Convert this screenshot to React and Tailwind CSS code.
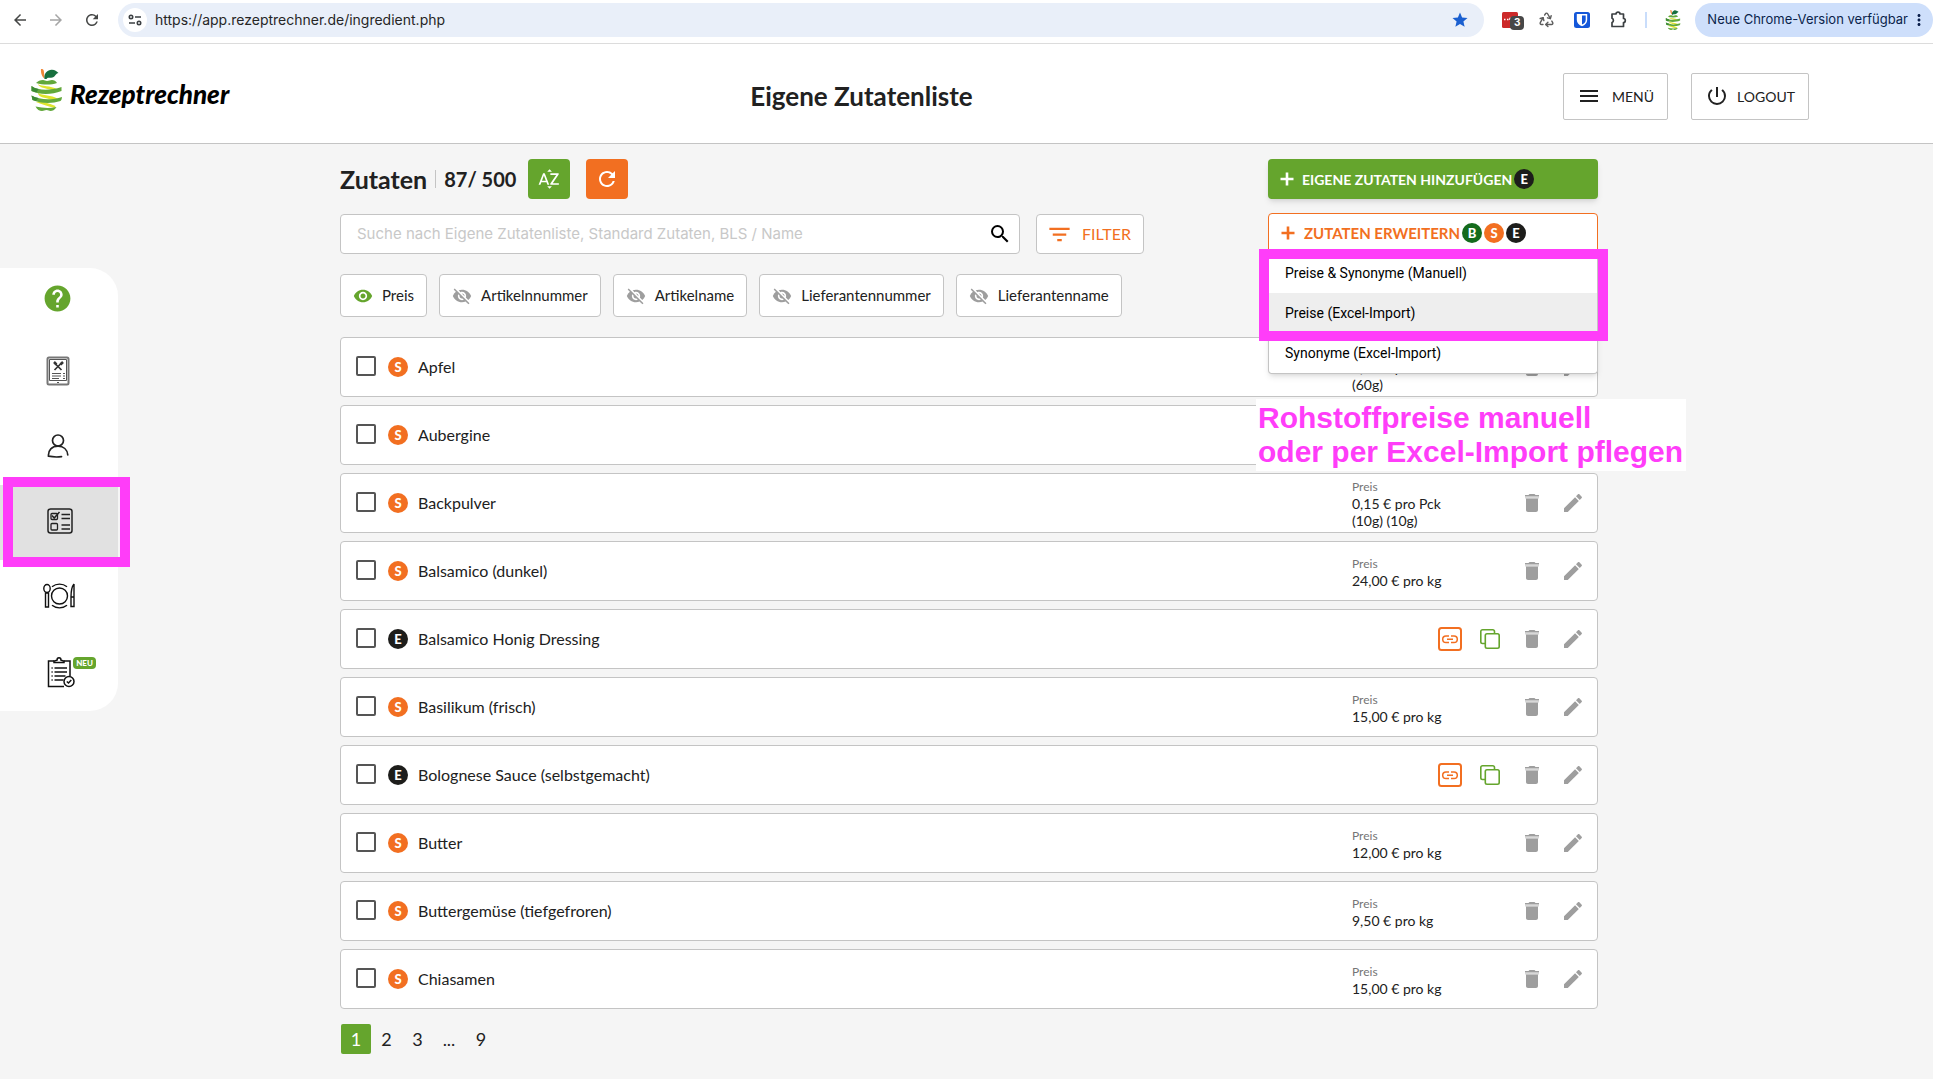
import { useState } from "react";
import { Recycle } from "lucide-react";
import {
  MdArrowBack,
  MdArrowForward,
  MdFilterList,
  MdHelp,
  MdMenu,
  MdMoreVert,
  MdPowerSettingsNew,
  MdRefresh,
  MdSearch,
  MdSortByAlpha,
  MdStar,
  MdVisibility,
  MdVisibilityOff,
} from "react-icons/md";

const ingredients = [
  { id: 1, type: "S", name: "Apfel", price: ["0,35 € pro Stk", "(60g)"] },
  { id: 2, type: "S", name: "Aubergine", price: [] },
  { id: 3, type: "S", name: "Backpulver", price: ["0,15 € pro Pck", "(10g) (10g)"] },
  { id: 4, type: "S", name: "Balsamico (dunkel)", price: ["24,00 € pro kg"] },
  { id: 5, type: "E", name: "Balsamico Honig Dressing", price: [] },
  { id: 6, type: "S", name: "Basilikum (frisch)", price: ["15,00 € pro kg"] },
  { id: 7, type: "E", name: "Bolognese Sauce (selbstgemacht)", price: [] },
  { id: 8, type: "S", name: "Butter", price: ["12,00 € pro kg"] },
  { id: 9, type: "S", name: "Buttergemüse (tiefgefroren)", price: ["9,50 € pro kg"] },
  { id: 10, type: "S", name: "Chiasamen", price: ["15,00 € pro kg"] },
];

const columns = ["Preis", "Artikelnnummer", "Artikelname", "Lieferantennummer", "Lieferantenname"];

const badgeColors = {
  B: "bg-[#146b1c]",
  S: "bg-[#f26f21]",
  E: "bg-[#1d1d1b]",
};

function Badge({ type }) {
  return (
    <span className={`flex size-5 shrink-0 items-center justify-center rounded-full text-[13px] leading-none font-black text-white ${badgeColors[type]}`}>
      {type}
    </span>
  );
}

function PlusIcon() {
  return (
    <svg viewBox="0 0 14 14" className="ml-1 size-[14px] shrink-0" fill="none" stroke="currentColor" strokeWidth="2.600">
      <path d="M7 .5v13M.5 7h13" />
    </svg>
  );
}

function AppleLogo({ className }) {
  return (
    <svg viewBox="0 0 31 42" className={className} aria-hidden="true">
      <path d="M10 0c2-.3 3 1 3 3.500l.5 6C11 8 9.500 4 10 0z" fill="#f0883a" />
      <path d="M13.500 10C12.500 4 17 .5 21 .8c3 .2 4.500 1.500 6.500 3.200-3 0-3 4.500-7.500 4.800-2 .1-3.500-.8-4.500 1.200z" fill="#176f3e" />
      <path d="M7 15c4 3 12 1 19.500 5.500L23 22C17 19 8 19.500 7 15zM7 24c5 3 13 1.500 20 6l-4 2C15 28 7 29 7 24zM5 33c6-1 12 1 19.500 4l-1 2C16 37 10 35 5 33z" fill="#dfe52d" />
      <path d="M5 14c2-2 4-3 7-3 2 0 2 1 4 1s3-1 5-1c2 0 4 1 5 3-6 2-14 2-21 0z" fill="#62a83b" />
      <path d="M.5 17c7 5 19 4.500 30 1v4c-10 4-22 4-30 0z" fill="#62a83b" />
      <path d="M.5 26.500c8 4.500 20 5 30.500 1.500-.2 2-.5 3-1.500 4-9 3-20 2.500-28-1z" fill="#62a83b" />
      <path d="M4.500 37.500c7 1.500 14 2 21 .5-2 3-4 4-6 4-1.500 0-2-1-4-1s-2.500 1-4.500 1c-2.500 0-5-1.500-6.500-4.500z" fill="#62a83b" />
      <path d="M.5 17c2 1.500 4 2.500 7 3l-2 3.500-5-1.500zM.5 26.500c2 1.200 4 2 7 2.600L5 32l-3.500-1z" fill="#3c8a34" />
    </svg>
  );
}

function BrowserBar() {
  return (
    <div className="flex h-11 items-center border-b border-[#dcdcdc] bg-white pb-1 pl-[11px] text-[#454746]">
      <button aria-label="Zurück" className="mr-[18px]"><MdArrowBack size={18} /></button>
      <button aria-label="Vor" className="mr-[18px] text-[#a5a5a5]"><MdArrowForward size={18} /></button>
      <button aria-label="Neu laden" className="mr-[17px]"><MdRefresh size={18} /></button>
      <div className="flex h-[34px] flex-1 items-center rounded-full bg-[#e9eff9] pr-[15px] pl-[5px]">
        <span className="mr-[8px] flex size-6 items-center justify-center rounded-full bg-white">
          <svg viewBox="0 0 14 12" className="h-3 w-[14px]" fill="none" stroke="#3c4043" strokeWidth="1.6">
            <circle cx="3" cy="3" r="1.700" />
            <path d="M7 3h6M1 9h6" />
            <circle cx="11" cy="9" r="1.700" />
          </svg>
        </span>
        <input
          aria-label="Adresse"
          defaultValue="https://app.rezeptrechner.de/ingredient.php"
          className="min-w-0 flex-1 bg-transparent font-['Inter','Roboto',sans-serif] text-[14px] text-[#262626] outline-none"
        />
        <MdStar size={18} className="text-[#1a5fd0]" />
      </div>
      <div className="flex items-center pl-[18px]">
        <span className="relative mr-[20px] h-4 w-4">
          <svg viewBox="0 0 16 16" className="size-4">
            <rect width="16" height="16" rx="1.500" fill="#cc2929" />
            <path d="M2 7.500h1.500M5 7.500h1.500M8 8V6.500h2M12 8V6M14 8V5.500" stroke="#fff" strokeWidth="1.500" fill="none" />
          </svg>
          <span className="absolute top-1 left-2 flex size-[14px] items-center justify-center rounded bg-[#474747] font-['Inter',sans-serif] text-[10px] font-bold text-white">3</span>
        </span>
        <Recycle size={17} className="mr-[19px] text-[#5c5c5c]" />
        <svg viewBox="0 0 16 16" className="mr-[20px] size-4">
          <rect width="16" height="16" rx="2.500" fill="#1457d9" />
          <path d="M2.800 2h10.400v6c0 3-2.200 5-5.200 6.300C5 13 2.800 11 2.800 8z" fill="#fff" />
          <path d="M8 3.600h3.700V8c0 2-1.500 3.500-3.700 4.500z" fill="#1457d9" />
        </svg>
        <svg viewBox="0 0 17 17" className="mr-[18px] size-[17px]" fill="none" stroke="#3c4043" strokeWidth="1.700" strokeLinejoin="round">
          <path d="M2 3h4a2 1.800 0 0 1 4 0h3.500v4.500a1.800 2 0 0 1 0 4V15.500H2v-4a2 2.200 0 0 0 0-4.200z" />
        </svg>
        <span className="mr-[18px] h-4 w-[2px] bg-[#c9ddfb]" />
        <AppleLogo className="mr-[14px] h-5 w-4" />
        <button className="flex h-[34px] items-center rounded-full bg-[#cedffb] pr-[5px] pl-3 font-['Inter','Roboto',sans-serif] text-[13px] text-[#0b1f4b]">
          Neue Chrome-Version verfügbar
          <MdMoreVert size={18} className="ml-[2px]" />
        </button>
      </div>
    </div>
  );
}

function Header() {
  return (
    <header className="flex h-[100px] items-center border-b border-[#c4c4c4] bg-white pt-[5px] pr-[124px] pl-[31px]">
      <a href="#" className="flex w-[201px] items-center gap-2 pb-[12px]">
        <AppleLogo className="h-[42px] w-[31px] shrink-0" />
        <span className="pt-2 text-[26px] leading-8 font-black text-black italic">Rezeptrechner</span>
      </a>
      <h1 className="flex-1 pr-[72px] text-center text-[26px] leading-8 font-bold text-[#212121]">Eigene Zutatenliste</h1>
      <button className="mr-[23px] flex h-[47px] items-center gap-[9px] rounded-xs border border-[#c4c4c4] px-[13px] text-[14px]">
        <MdMenu size={24} />
        <span className="pl-[2px]">MENÜ</span>
      </button>
      <button className="flex h-[47px] items-center gap-2 rounded-xs border border-[#c4c4c4] px-[13px] text-[14px]">
        <MdPowerSettingsNew size={24} />
        LOGOUT
      </button>
    </header>
  );
}

function RecipeIcon() {
  return (
    <svg viewBox="0 0 24 30" className="h-[30px] w-6" fill="none" stroke="#555">
      <rect x="1.500" y="1.500" width="21" height="27" rx="1.500" stroke="#777" strokeWidth="2" />
      <path d="M3.500 3.500h17v21h-17z" />
      <path d="M8.500 7l7 7M15.500 7l-7 7" strokeWidth="1.700" stroke="#333" />
      <path d="M8 6l2.500 2.500M14.500 8.500L17 6" strokeWidth="2.500" stroke="#333" />
      <path d="M6 17.500h9M6 20h9M6 22.500h7M17 17.500h2M17 20h2M17 22.500h2" strokeWidth="1.200" />
      <path d="M11 26.500h2" />
    </svg>
  );
}

function PersonIcon() {
  return (
    <svg viewBox="0 0 22 24" className="h-6 w-[22px]" fill="none" stroke="#222" strokeWidth="1.700" strokeLinecap="round">
      <circle cx="11" cy="6.500" r="5.500" />
      <path d="M14.500 22.700c-4.500.5-9 .3-13-.5C1 16 5 12.200 11 12.200c5.500 0 9.300 3.300 9.800 8.800" />
    </svg>
  );
}

function ListIcon() {
  return (
    <svg viewBox="0 0 26 26" className="size-[26px]" fill="none" stroke="#222">
      <rect x="1" y="1" width="24" height="24" rx="2.500" strokeWidth="1.500" />
      <rect x="4" y="5.500" width="6.500" height="6" rx="1" strokeWidth="1.300" />
      <path d="M5 7.500l2.200 2.500L12.500 4" strokeWidth="1.500" />
      <rect x="4" y="15.500" width="6.500" height="6.500" rx="1" strokeWidth="1.300" />
      <path d="M14.500 6.500H23M14.500 10.500H23M14.500 17H23M14.500 21H23" strokeWidth="1.300" />
    </svg>
  );
}

function PlateIcon() {
  return (
    <svg viewBox="0 0 32 26" className="h-[26px] w-8" fill="none" stroke="#111" strokeWidth="1.400">
      <circle cx="16.500" cy="13" r="8" />
      <path d="M9 3.800a12 12 0 0 1 15 0M9 22.200a12 12 0 0 0 15 0" />
      <ellipse cx="4" cy="5.500" rx="3.200" ry="4" />
      <path d="M2.500 10h3v14h-3zM31 1v22.500h-3V14h3M31 1c-2.500 3-3 7-3 13" />
    </svg>
  );
}

function ClipboardIcon() {
  return (
    <svg viewBox="0 0 28 31" className="h-[31px] w-7" fill="none" stroke="#111" strokeWidth="1.500">
      <path d="M7 4H1.500v25.500H17M17 4h6v15" />
      <path d="M7 5.500V4l3-.8C10 0 14 0 14 3.200l3 .8v1.500z" />
      <path d="M7.500 11H20M7.500 15H20M7.500 19h11M7.500 23h9" />
      <path d="M4.500 11h1.200M4.500 15h1.200M4.500 19h1.200M4.500 23h1.200" />
      <circle cx="22" cy="24.500" r="5" fill="#fff" />
      <path d="M19.800 24.500l1.700 1.500 2.800-3" />
    </svg>
  );
}

function Sidebar() {
  return (
    <div className="relative mt-[124px] h-fit w-[118px] shrink-0 rounded-r-[28px] bg-white pb-px">
      <a href="#" aria-label="Hilfe" className="flex h-[67px] items-center pb-[7px] pl-[42px] text-[#65a52d]"><MdHelp size={31} /></a>
      <a href="#" aria-label="Rezepte" className="flex h-[75px] items-center pb-1 pl-[46px]"><RecipeIcon /></a>
      <a href="#" aria-label="Profil" className="flex h-[75px] items-center pb-1 pl-[47px]"><PersonIcon /></a>
      <a href="#" aria-label="Zutatenliste" className="flex h-[75px] items-center bg-[#e1e1e1] pb-1 pl-[47px]"><ListIcon /></a>
      <a href="#" aria-label="Gerichte" className="flex h-[75px] items-center pb-1 pl-[43px]"><PlateIcon /></a>
      <a href="#" aria-label="Checkliste" className="relative flex h-[75px] items-center pl-[47px]">
        <ClipboardIcon />
        <span className="absolute top-[22px] left-[73px] flex h-3 w-[23px] items-center justify-center rounded-sm bg-[#65a52d] text-[8px] leading-none font-black text-white">NEU</span>
      </a>
      {/* Markierung um den aktiven Menüpunkt */}
      <div className="pointer-events-none absolute top-[209px] left-[3px] h-[90px] w-[127px] border-10 border-[#ff3df9]" />
    </div>
  );
}

function TrashIcon() {
  return (
    <svg viewBox="0 0 24 24" className="size-6" fill="#9e9e9e">
      <path d="M5 4h3.500l1-1h5l1 1H19v1.300H5z" />
      <path d="M5 5h14v2.500H5z" opacity=".4" />
      <path d="M6 7.500h12V19c0 1.100-.9 2-2 2H8c-1.100 0-2-.9-2-2z" />
    </svg>
  );
}

function PencilIcon() {
  return (
    <svg viewBox="0 0 24 24" className="size-6" fill="#9e9e9e">
      <path d="M3 17.250V21h3.750L17.810 9.940l-3.750-3.750z" />
      <path d="M15 5.200l3.750 3.750 1.960-1.910c.39-.39.39-1.020 0-1.410l-2.340-2.340c-.39-.39-1.020-.39-1.410 0z" />
    </svg>
  );
}

function LinkIcon() {
  return (
    <svg viewBox="0 0 24 24" className="size-6" fill="none" stroke="#f26f21">
      <rect x="1" y="1" width="22" height="22" rx="2.500" strokeWidth="2" />
      <path d="M11 9H8a3.300 3.300 0 0 0 0 6.600h3M13 9h3a3.300 3.300 0 0 1 0 6.600h-3M9 12.300h6" strokeWidth="1.500" />
    </svg>
  );
}

function CopyIcon() {
  return (
    <svg viewBox="0 0 20 20" className="size-5" fill="none" stroke="#65a52d" strokeWidth="1.600">
      <path d="M5 14.500H2.500A1.700 1.700 0 0 1 .8 12.800V2.500A1.700 1.700 0 0 1 2.500.8h10.300a1.700 1.700 0 0 1 1.700 1.700V4" />
      <rect x="5.300" y="4.800" width="13.900" height="14.400" rx="1.700" />
    </svg>
  );
}

function IngredientRow({ item }) {
  const [checked, setChecked] = useState(false);

  return (
    <li className="flex h-[60px] items-center rounded-sm border border-[#c4c4c4] bg-white pr-3 pl-[15px]">
      <label className="flex flex-1 items-center">
        <input
          type="checkbox"
          checked={checked}
          onChange={(e) => setChecked(e.target.checked)}
          className="mb-[2px] size-5 appearance-none rounded-xs border-2 border-[#555] bg-white checked:bg-[#65a52d]"
        />
        <span className="ml-3"><Badge type={item.type} /></span>
        <span className="ml-[10px] text-[16px] leading-5">{item.name}</span>
      </label>
      {item.price.length > 0 && (
        <div className="w-[108px] pt-px leading-[17px]">
          <p className="text-[12px] text-[#757575]">Preis</p>
          {item.price.map((line) => (
            <p key={line} className="text-[14px]">{line}</p>
          ))}
        </div>
      )}
      {item.type === "E" && (
        <div className="flex items-center gap-[18px] pr-[20px]">
          <button aria-label="Verknüpfen"><LinkIcon /></button>
          <button aria-label="Kopieren"><CopyIcon /></button>
        </div>
      )}
      <div className={item.price.length > 0 ? "ml-[60px] flex gap-[17px]" : "flex gap-[17px]"}>
        <button aria-label="Löschen"><TrashIcon /></button>
        <button aria-label="Bearbeiten"><PencilIcon /></button>
      </div>
    </li>
  );
}

function ExtendMenu() {
  return (
    <div className="relative">
      <button className="flex h-10 w-full items-center rounded-sm border border-[#f26f21] bg-white pl-2 text-[15px] font-bold text-[#f26f21]">
        <PlusIcon />
        <span className="mr-[2px] ml-[9px]">ZUTATEN ERWEITERN</span>
        <span className="flex gap-[2px]">
          <Badge type="B" />
          <Badge type="S" />
          <Badge type="E" />
        </span>
      </button>
      <div className="absolute top-10 left-0 z-10 flex w-full flex-col rounded-b-sm border border-t-0 border-[#c4c4c4] bg-white font-['Roboto',sans-serif] text-[14px] text-black shadow-md">
        <button className="h-10 pl-4 text-left">Preise &amp; Synonyme (Manuell)</button>
        <button className="h-10 bg-[#eee] pl-4 text-left">Preise (Excel-Import)</button>
        <button className="h-10 pl-4 text-left">Synonyme (Excel-Import)</button>
      </div>
      <div className="pointer-events-none absolute top-9 -right-[10px] -left-[9px] z-20 h-[92px] border-10 border-[#ff3df9]" />
      <p className="absolute top-[186px] -left-3 z-20 bg-white py-[2px] pr-[3px] pl-[2px] font-['Liberation_Sans',Arial,sans-serif] text-[30px] leading-[34px] font-bold whitespace-nowrap text-[#ff3df9]">
        Rohstoffpreise manuell
        <br />
        oder per Excel-Import pflegen
      </p>
    </div>
  );
}

function App() {
  const [visible, setVisible] = useState(["Preis"]);

  const toggleColumn = (name) => {
    setVisible(visible.includes(name) ? visible.filter((v) => v !== name) : [...visible, name]);
  };

  return (
    <div className="min-h-screen bg-[#f5f5f5] font-['Lato',sans-serif] text-[#212121]">
      <BrowserBar />
      <Header />
      <div className="flex">
        <Sidebar />
        <main className="min-w-0 flex-1 pt-[15px] pr-[335px] pl-[222px]">
          <div className="mb-5 flex justify-between">
            <div>
              <div className="mb-[15px] flex h-10 items-center">
                <h2 className="text-[25px] leading-8 font-bold">Zutaten</h2>
                <span className="mx-2 h-[18px] w-px bg-[#c4c4c4]" />
                <span className="mr-3 text-[20px] leading-8 font-bold">87/ 500</span>
                <button aria-label="Sortieren" className="mr-4 flex h-10 w-[42px] items-center justify-center rounded-sm bg-[#65a52d] text-white"><MdSortByAlpha size={24} /></button>
                <button aria-label="Aktualisieren" className="flex h-10 w-[42px] items-center justify-center rounded-sm bg-[#f26f21] text-white"><MdRefresh size={24} /></button>
              </div>
              <div className="mb-5 flex gap-4">
                <div className="flex h-10 w-[680px] items-center rounded-sm border border-[#c4c4c4] bg-white pr-[7px] pl-4">
                  <input
                    type="text"
                    aria-label="Suche"
                    placeholder="Suche nach Eigene Zutatenliste, Standard Zutaten, BLS / Name"
                    className="min-w-0 flex-1 font-['Inter',sans-serif] text-[15px] outline-none placeholder:text-[#c8c8c8]"
                  />
                  <button aria-label="Suchen" className="text-black"><MdSearch size={24} /></button>
                </div>
                <button className="flex h-10 items-center gap-[9px] rounded-sm border border-[#c4c4c4] bg-white pr-3 pl-[9px] text-[16px] text-[#f26f21]">
                  <MdFilterList size={27} />
                  FILTER
                </button>
              </div>
              <div className="flex gap-3">
                {columns.map((name) => (
                  <button key={name} onClick={() => toggleColumn(name)} className="flex h-[43px] items-center gap-[9px] rounded-sm border border-[#c4c4c4] bg-white px-3 text-[15px]">
                    {visible.includes(name) ? <MdVisibility size={20} className="text-[#65a52d]" /> : <MdVisibilityOff size={20} className="text-[#9e9e9e]" />}
                    {name}
                  </button>
                ))}
              </div>
            </div>
            <div className="flex w-[330px] flex-col gap-[14px]">
              <button className="flex h-10 items-center rounded-sm bg-[#65a52d] pl-2 text-[14px] font-bold text-white shadow-md">
                <PlusIcon />
                <span className="mr-[2px] ml-2">EIGENE ZUTATEN HINZUFÜGEN</span>
                <Badge type="E" />
              </button>
              <ExtendMenu />
            </div>
          </div>

          {/* Liste der Zutaten */}
          <ul className="space-y-2">
            {ingredients.map((item) => (
              <IngredientRow key={item.id} item={item} />
            ))}
          </ul>

          <nav aria-label="Seiten" className="mt-[15px] flex text-center text-[18px] leading-[30px]">
            <a href="#" className="ml-px w-[30px] rounded-xs bg-[#65a52d] text-white">1</a>
            <a href="#" className="w-[31px]">2</a>
            <a href="#" className="w-[31px]">3</a>
            <span className="w-[32px]">...</span>
            <a href="#" className="w-[32px]">9</a>
          </nav>
        </main>
      </div>
    </div>
  );
}

export default App;
